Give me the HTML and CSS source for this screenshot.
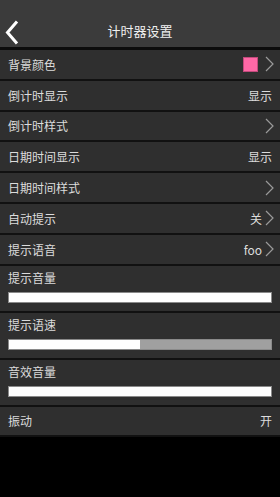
FILE: index.html
```html
<!DOCTYPE html>
<html lang="zh">
<head>
    <meta charset="UTF-8">
    <meta name="viewport" content="width=device-width, initial-scale=1.0">
    <title>计时器设置</title>
    <link rel="stylesheet" href="styles.css">
</head>
<body>
    <div class="header">
        <svg class="back" width="14" height="25" viewBox="0 0 14 25">
            <path d="M12 1.5 L2.5 12.5 L12 23.5" fill="none" stroke="#fff" stroke-width="3"/>
        </svg>
        <h1>计时器设置</h1>
    </div>

    <ul class="list">
        <li class="row">
            <span>背景颜色</span>
            <span class="value"><i class="swatch"></i><svg class="arrow" viewBox="0 0 9 16"><path d="M1 1 L8 8 L1 15" /></svg></span>
        </li>
        <li class="row">
            <span>倒计时显示</span>
            <span class="value">显示</span>
        </li>
        <li class="row">
            <span>倒计时样式</span>
            <span class="value"><svg class="arrow" viewBox="0 0 9 16"><path d="M1 1 L8 8 L1 15" /></svg></span>
        </li>
        <li class="row">
            <span>日期时间显示</span>
            <span class="value">显示</span>
        </li>
        <li class="row">
            <span>日期时间样式</span>
            <span class="value"><svg class="arrow" viewBox="0 0 9 16"><path d="M1 1 L8 8 L1 15" /></svg></span>
        </li>
        <li class="row">
            <span>自动提示</span>
            <span class="value">关<svg class="arrow" viewBox="0 0 9 16"><path d="M1 1 L8 8 L1 15" /></svg></span>
        </li>
        <li class="row">
            <span>提示语音</span>
            <span class="value">foo<svg class="arrow" viewBox="0 0 9 16"><path d="M1 1 L8 8 L1 15" /></svg></span>
        </li>
        <li class="slider-row">
            <span>提示音量</span>
            <div class="bar"><div class="fill" style="width: 100%"></div></div>
        </li>
        <li class="slider-row">
            <span>提示语速</span>
            <div class="bar"><div class="fill" style="width: 50%"></div></div>
        </li>
        <li class="slider-row">
            <span>音效音量</span>
            <div class="bar"><div class="fill" style="width: 100%"></div></div>
        </li>
        <li class="row">
            <span>振动</span>
            <span class="value">开</span>
        </li>
    </ul>
</body>
</html>
```

FILE: styles.css
```css
body {
    margin: 0;
    background: #000;
    font-family: "Noto Sans CJK SC", "DejaVu Sans", sans-serif;
    color: #dcdcdc;
    font-size: 12px;
}
.header {
    height: 47px;
    background: #3b3b3b;
    display: flex;
    align-items: center;
    justify-content: center;
    position: relative;
    border-bottom: 3px solid #0c0c0c;
}
.header h1 {
    margin: 0;
    font-size: 13px;
    font-weight: normal;
    color: #f0f0f0;
    padding-top: 14px;
}
.back {
    position: absolute;
    left: 5px;
    top: 20px;
}
.list {
    list-style: none;
    margin: 0;
    padding: 0;
}
.row {
    height: 28.8px;
    padding: 0 8px;
    background: #2f2f2f;
    display: flex;
    align-items: center;
    justify-content: space-between;
    border-bottom: 2px solid #111;
}
.value {
    display: flex;
    align-items: center;
    gap: 3px;
}
.arrow {
    width: 9px;
    height: 16px;
    fill: none;
    stroke: #9a9a9a;
    stroke-width: 1.2;
    margin-right: -2px;
}
.swatch {
    width: 15px;
    height: 15px;
    background: #ff68a6;
    border: 1px solid #c24a7c;
    box-sizing: border-box;
    margin-right: 4px;
}
.slider-row {
    background: #2f2f2f;
    padding: 3px 8px 8px;
    border-bottom: 2px solid #111;
}
.slider-row span {
    display: block;
    line-height: 18px;
}
.bar {
    margin-top: 5px;
    height: 11px;
    background: #a0a0a0;
    border: 1px solid #8a8a8a;
    box-sizing: border-box;
}
.fill {
    height: 100%;
    background: #fff;
}
```
